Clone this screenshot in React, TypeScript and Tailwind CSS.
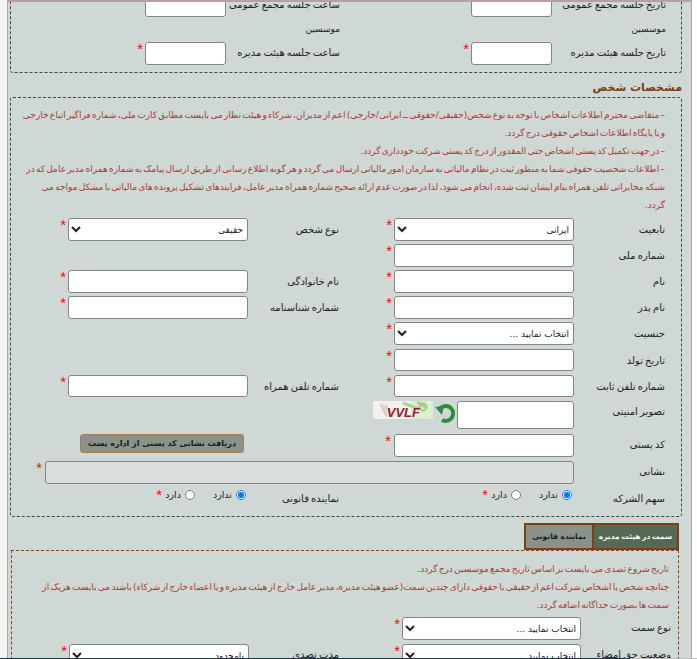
const FONT = "font-['DejaVu_Sans',sans-serif]"

function Star() {
  return <span className="-mt-[2px] block h-[10px] font-['Liberation_Sans',sans-serif] text-[15px] leading-[15px] text-[#ff0000]">*</span>
}

function Field({ className = '' }: { className?: string }) {
  return <input type="text" className={`block h-[23px] w-full rounded-[3px] border border-[#858585] bg-white ${className}`} />
}

function Pick({ value }: { value: string }) {
  return (
    <select
      defaultValue={value}
      className="block h-[23px] w-full rounded-[3px] border border-[#858585] bg-white text-[9px] text-[#222]"
    >
      <option>{value}</option>
    </select>
  )
}

function Label({ children }: { children: React.ReactNode }) {
  return <label className="block whitespace-nowrap pt-[2px] text-[10px] leading-[18px] text-[#222] [word-spacing:-1px]">{children}</label>
}

function Radio({ text, checked }: { text: string; checked?: boolean }) {
  return (
    <span className="flex items-center gap-[4px] whitespace-nowrap text-[9.5px] text-[#222]">
      <input type="radio" readOnly checked={!!checked} className="m-0 h-[10px] w-[10px] accent-[#0075ff]" />
      {text}
    </span>
  )
}

const PERSON_COLS = 'grid grid-cols-[91px_180px_55px_91px_180px_1fr]'
const NOTE = 'whitespace-nowrap text-[9px] leading-[18px] text-[#a8383c] [word-spacing:-1.6px]'

function PersonRow({
  right,
  rightField,
  left,
  leftField,
  className = '',
}: {
  right: string
  rightField: React.ReactNode
  left?: string
  leftField?: React.ReactNode
  className?: string
}) {
  return (
    <div className={`${PERSON_COLS} ${className}`}>
      <div className="pt-[1px]"><Label>{right}</Label></div>
      <div>{rightField}</div>
      <div className="pr-[2px] pt-[1px]"><Star /></div>
      {left ? <div className="pt-[1px]"><Label>{left}</Label></div> : <div />}
      <div>{leftField}</div>
      <div className="pr-[2px] pt-[1px]">{left ? <Star /> : null}</div>
    </div>
  )
}

function Captcha() {
  return (
    <div className="flex items-start gap-[2px] pr-[1px]">
      <svg width="21" height="22" viewBox="0 0 21 22" className="mt-[1px] shrink-0">
        <path d="M4 8 A7.5 7.5 0 1 1 7 18" fill="none" stroke="#2e8b3a" strokeWidth="4" />
        <path d="M0 5 L9 4 L7 13 Z" fill="#2e8b3a" />
      </svg>
      <svg width="60" height="18" viewBox="0 0 60 18" className="shrink-0 rounded-[2px]">
        <rect width="60" height="18" fill="#f3f1ee" />
        <rect x="38" width="22" height="18" fill="#dcefd2" />
        <path d="M8 3 L14 15 M12 4 L20 16" stroke="#d8d2c4" strokeWidth="3" />
        <path d="M30 2 L46 8 M44 1 L54 7" stroke="#a8d68c" strokeWidth="3" />
        <circle cx="50" cy="6" r="3.5" fill="none" stroke="#9ccf80" strokeWidth="2" />
        <text x="47" y="16" fontSize="13" fontStyle="italic" fontWeight="700" fill="#a01830" fontFamily="Liberation Sans, sans-serif">VVLF</text>
      </svg>
    </div>
  )
}

function RadioPair() {
  return (
    <div className="col-span-2 flex items-start gap-[18px] pr-[2px] pt-[1px]">
      <Radio text="ندارد" checked />
      <span className="flex items-start gap-[3px]"><Radio text="دارد" /><span className="pt-[1px]"><Star /></span></span>
    </div>
  )
}

export default function App() {
  return (
    <div dir="rtl" className={`${FONT} relative h-[659px] w-[697px] overflow-hidden bg-white`}>
      <div className="flex h-full">
        {/* right gutter */}
        <div className="w-[5px] shrink-0 bg-white" />
        <div className="h-full w-[685px] shrink-0 overflow-hidden border-x border-x-[#a3aca8] border-t-2 border-t-[#b5a0aa] bg-[#d0d8d5]">
          <div className="-mt-[8px] pl-[2px] pr-[9px]">
            {/* جلسات */}
            <div className="relative h-[79px] rounded-b-[3px] border border-t-0 border-dashed border-[#444] pr-[15px]">
              <div className="grid grid-cols-[114px_81px_131px_114px_81px]">
                <Label>تاریخ جلسه مجمع عمومی</Label>
                <Field />
                <div />
                <Label>ساعت جلسه مجمع عمومی</Label>
                <Field />
              </div>
              <div className="mt-[5px] h-[15px] text-[9px] leading-[15px] text-[#222]">
                <div className="grid grid-cols-[114px_81px_131px_114px_81px]">
                  <span>موسسین</span>
                  <div />
                  <div />
                  <span>موسسین</span>
                </div>
              </div>
              <div className="mt-[5px] grid grid-cols-[114px_81px_131px_114px_81px_1fr]">
                <Label>تاریخ جلسه هیئت مدیره</Label>
                <Field />
                <div className="pr-[2px] pt-[1px]"><Star /></div>
                <Label>ساعت جلسه هیئت مدیره</Label>
                <Field />
                <div className="pr-[2px] pt-[1px]"><Star /></div>
              </div>
            </div>

            <h3 className="mt-[7px] h-[17px] text-[11px] font-bold leading-[16px] text-[#7a3e10]">مشخصات شخص</h3>

            {/* مشخصات شخص */}
            <div className="h-[420px] rounded-[3px] border border-dashed border-[#444] pr-[16px] pt-[8px]">
              <div className={`h-[112px] ${NOTE}`}>
                <div>– متقاضی محترم اطلاعات اشخاص با توجه به نوع شخص(حقیقی/حقوقی ــ ایرانی/خارجی) اعم از مدیران، شرکاء و هیئت نظار می بایست مطابق کارت ملی، شماره فراگیر اتباع خارجی</div>
                <div>و یا پایگاه اطلاعات اشخاص حقوقی درج گردد.</div>
                <div>– در جهت تکمیل کد پستی اشخاص حتی المقدور از درج کد پستی شرکت خودداری گردد.</div>
                <div>– اطلاعات شخصیت حقوقی شما به منظور ثبت در نظام مالیاتی به سازمان امور مالیاتی ارسال می گردد و هر گونه اطلاع رسانی از طریق ارسال پیامک به شماره همراه مدیر عامل که در</div>
                <div>شبکه مخابراتی تلفن همراه بنام ایشان ثبت شده، انجام می شود، لذا در صورت عدم ارائه صحیح شماره همراه مدیر عامل، فرایندهای تشکیل پرونده های مالیاتی با مشکل مواجه می</div>
                <div>گردد.</div>
              </div>

              <PersonRow right="تابعیت" rightField={<Pick value="ایرانی" />} left="نوع شخص" leftField={<Pick value="حقیقی" />} />
              <PersonRow className="mt-[3px]" right="شماره ملی" rightField={<Field />} />
              <PersonRow className="mt-[3px]" right="نام" rightField={<Field />} left="نام خانوادگی" leftField={<Field />} />
              <PersonRow className="mt-[3px]" right="نام پدر" rightField={<Field />} left="شماره شناسنامه" leftField={<Field />} />
              <PersonRow className="mt-[3px]" right="جنسیت" rightField={<Pick value="انتخاب نمایید ..." />} />
              <PersonRow className="mt-[4px]" right="تاریخ تولد" rightField={<Field className="!h-[22px]" />} />
              <PersonRow className="mt-[4px]" right="شماره تلفن ثابت" rightField={<Field className="!h-[22px]" />} left="شماره تلفن همراه" leftField={<Field className="!h-[22px]" />} />

              <div className="mt-[4px] grid h-[28px] grid-cols-[91px_auto_1fr]">
                <Label>تصویر امنیتی</Label>
                <input type="text" className="block h-[28px] w-[117px] rounded-[3px] border border-[#858585] bg-white" />
                <Captcha />
              </div>

              <div className={`${PERSON_COLS} mt-[5px]`}>
                <Label>کد پستی</Label>
                <Field />
                <div className="pr-[3px] pt-[1px]"><Star /></div>
                <div className="col-span-2 pr-[95px]">
                  <button className="block h-[19px] w-[164px] whitespace-nowrap rounded-[3px] border border-[#a87a5a] bg-[#8a938a] text-[8px] font-bold text-[#1a1a1a]">
                    دریافت نشانی کد پستی از اداره پست
                  </button>
                </div>
              </div>

              <div className="mt-[4px] flex">
                <div className="w-[91px] shrink-0"><Label>نشانی</Label></div>
                <input disabled className="block h-[23px] w-[529px] shrink-0 rounded-[3px] border border-[#858585] bg-[#d9dfdc]" />
                <div className="pr-[3px] pt-[1px]"><Star /></div>
              </div>

              <div className={`${PERSON_COLS} mt-[3px]`}>
                <div className="pt-[1px]"><Label>سهم الشرکه</Label></div>
                <RadioPair />
                <div className="pt-[1px]"><Label>نماینده قانونی</Label></div>
                <RadioPair />
              </div>
            </div>

            {/* تب ها */}
            <div className="mr-[3px] mt-[6px] flex">
              <div className="flex h-[27px] w-[87px] items-center justify-center whitespace-nowrap border-2 border-[#7d3f16] bg-[#546a54] text-[7.5px] font-bold text-white [word-spacing:-1px]">سمت در هیئت مدیره</div>
              <div className="flex h-[27px] w-[68px] items-center justify-center whitespace-nowrap border-2 border-r-0 border-[#7d3f16] bg-[#8a938a] text-[7.5px] font-bold text-[#1a1a1a]">نماینده قانونی</div>
            </div>

            <div className="ml-[1px] mr-[3px] h-[120px] border border-dashed border-[#8b4513] pr-[7px] pt-[9px]">
              <div className={`h-[57px] pr-[2px] ${NOTE}`}>
                <div>تاریخ شروع تصدی می بایست بر اساس تاریخ مجمع موسسین درج گردد.</div>
                <div>چنانچه شخص یا اشخاص شرکت اعم از حقیقی یا حقوقی دارای چندین سمت(عضو هیئت مدیره، مدیر عامل خارج از هیئت مدیره و یا اعضاء خارج از شرکاء) باشند می بایست هریک از</div>
                <div>سمت ها بصورت جداگانه اضافه گردد.</div>
              </div>
              <div className="grid grid-cols-[90px_179px_63px_90px_180px]">
                <Label>نوع سمت</Label>
                <Pick value="انتخاب نمایید ..." />
                <div className="pr-[2px] pt-[1px]"><Star /></div>
              </div>
              <div className="mt-[4px] grid grid-cols-[90px_179px_63px_90px_180px_1fr]">
                <Label>وضعیت حق امضاء</Label>
                <Pick value="انتخاب نمایید ..." />
                <div className="pr-[2px] pt-[1px]"><Star /></div>
                <Label>مدت تصدی</Label>
                <Pick value="نامحدود" />
                <div className="pr-[2px] pt-[1px]"><Star /></div>
              </div>
            </div>
          </div>
        </div>
        {/* left gutter */}
        <div className="w-[7px] shrink-0 bg-[#f4f4f4]" />
      </div>
      {/* bottom taskbar edge */}
      <div className="absolute bottom-0 left-0 flex h-[1px] w-full flex-row-reverse">
        <div className="flex-1 bg-[#1f3a40]" />
        <div className="w-[67px] bg-[#bdbdbd]" />
      </div>
    </div>
  )
}
